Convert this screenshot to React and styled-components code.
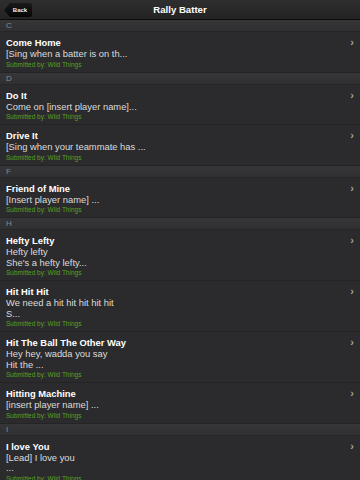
import React from 'react';
import styled, { createGlobalStyle } from 'styled-components';

const sections = [
    { letter: 'C', songs: [
        { title: 'Come Home', lines: ['[Sing when a batter is on th...'] },
    ] },
    { letter: 'D', songs: [
        { title: 'Do It', lines: ['Come on [insert player name]...'] },
        { title: 'Drive It', lines: ['[Sing when your teammate has ...'] },
    ] },
    { letter: 'F', songs: [
        { title: 'Friend of Mine', lines: ['[Insert player name] ...'] },
    ] },
    { letter: 'H', songs: [
        { title: 'Hefty Lefty', lines: ['Hefty lefty', "She's a hefty lefty..."] },
        { title: 'Hit Hit Hit', lines: ['We need a hit hit hit hit hit', 'S...'] },
        { title: 'Hit The Ball The Other Way', lines: ['Hey hey, wadda you say', 'Hit the ...'] },
        { title: 'Hitting Machine', lines: ['[insert player name] ...'] },
    ] },
    { letter: 'I', songs: [
        { title: 'I love You', lines: ['[Lead] I love you', '...'] },
    ] },
];

const App = () => {
    return (
        <Screen>
            <GlobalStyle />
            <NavBar>
                <BackButton>Back</BackButton>
                <NavTitle>Rally Batter</NavTitle>
            </NavBar>
            {sections.map(section => (
                <div key={section.letter}>
                    <SectionHeader>{section.letter}</SectionHeader>
                    {section.songs.map(song => (
                        <Row key={song.title}>
                            <RowText>
                                <SongTitle>{song.title}</SongTitle>
                                {song.lines.map((line, i) => (
                                    <Lyric key={i}>{line}</Lyric>
                                ))}
                                <Submitted>Submitted by: Wild Things</Submitted>
                            </RowText>
                            <Chevron>&#8250;</Chevron>
                        </Row>
                    ))}
                </div>
            ))}
        </Screen>
    );
}

const GlobalStyle = createGlobalStyle`
    html, body {
        margin: 0;
        padding: 0;
        background: #2b2b2d;
        overflow: hidden;
    }
`

const Screen = styled.div`
    width: 360px;
    height: 480px;
    overflow: hidden;
    font-family: "Liberation Sans", Arial, sans-serif;
    background: #2b2b2d;
`

const NavBar = styled.div`
    position: relative;
    height: 19px;
    display: flex;
    align-items: center;
    justify-content: center;
    background: linear-gradient(#2e2e2e, #232323);
    border-bottom: 1px solid #0c0c0c;
`

const BackButton = styled.div`
    position: absolute;
    left: 4px;
    top: 3px;
    height: 14px;
    width: 28px;
    padding-left: 4px;
    box-sizing: border-box;
    display: flex;
    align-items: center;
    justify-content: center;
    font-size: 6px;
    font-weight: bold;
    color: #eee;
    background: linear-gradient(#1a1a1a, #050505);
    border-radius: 2px;
    clip-path: polygon(6px 0, 100% 0, 100% 100%, 6px 100%, 0 50%);
`

const NavTitle = styled.div`
    color: #fff;
    font-size: 9.6px;
    font-weight: bold;
`

const SectionHeader = styled.div`
    height: 12px;
    padding-left: 6px;
    display: flex;
    align-items: center;
    font-size: 8px;
    color: #8a8a8a;
    background: linear-gradient(#363638, #303032);
    border-bottom: 1px solid #262628;
    box-sizing: border-box;
`

const Row = styled.div`
    display: flex;
    align-items: flex-start;
    padding: 5px 6px 3px 6px;
    background: #2b2b2d;
    border-bottom: 1px solid #242426;
`

const RowText = styled.div`
    flex: 1;
    display: flex;
    flex-direction: column;
`

const SongTitle = styled.div`
    font-size: 9.4px;
    font-weight: bold;
    line-height: 12px;
    color: #fff;
`

const Lyric = styled.div`
    font-size: 9.4px;
    line-height: 10.5px;
    color: #dcdcdc;
`

const Submitted = styled.div`
    font-size: 6.5px;
    line-height: 9px;
    color: #56a21e;
`

const Chevron = styled.div`
    font-size: 11px;
    font-weight: bold;
    line-height: 10px;
    color: #a0a0a0;
`

export default App;
